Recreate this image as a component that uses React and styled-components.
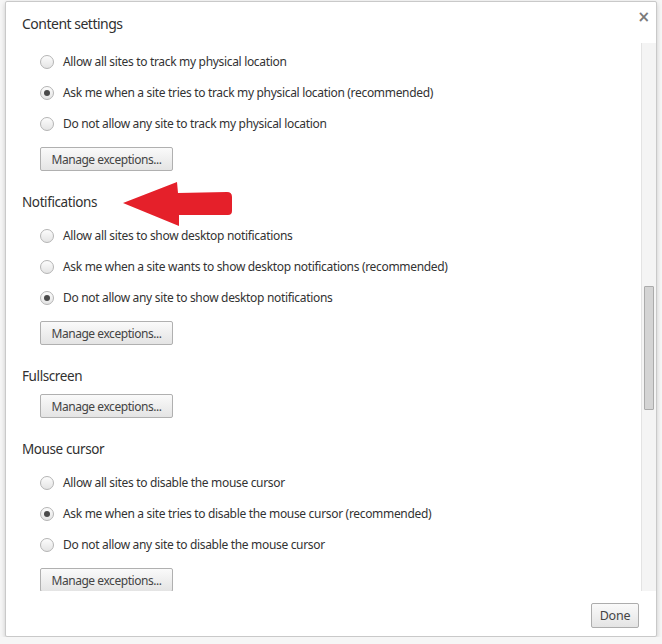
import React from "react";
import styled, { createGlobalStyle } from "styled-components";

const sections = [
  {
    heading: null,
    options: [
      "Allow all sites to track my physical location",
      "Ask me when a site tries to track my physical location (recommended)",
      "Do not allow any site to track my physical location",
    ],
    checked: 1,
  },
  {
    heading: "Notifications",
    options: [
      "Allow all sites to show desktop notifications",
      "Ask me when a site wants to show desktop notifications (recommended)",
      "Do not allow any site to show desktop notifications",
    ],
    checked: 2,
  },
  { heading: "Fullscreen", options: [], checked: -1 },
  {
    heading: "Mouse cursor",
    options: [
      "Allow all sites to disable the mouse cursor",
      "Ask me when a site tries to disable the mouse cursor (recommended)",
      "Do not allow any site to disable the mouse cursor",
    ],
    checked: 1,
  },
];

export default function App() {
  return (
    <>
      <GlobalStyle />
      <Dialog>
        {/* HEADER */}
        <Header>
          <Title>Content settings</Title>
          <Close>×</Close>
        </Header>

        {/* SCROLLING BODY */}
        <Body>
          <Content>
            {sections.map((s, i) => (
              <Section key={i} first={i === 0}>
                {s.heading && <Heading>{s.heading}</Heading>}
                {s.options.length > 0 && (
                  <Options>
                    {s.options.map((o, j) => (
                      <Option key={j}>
                        <Radio checked={j === s.checked} />
                        {o}
                      </Option>
                    ))}
                  </Options>
                )}
                <Button>Manage exceptions...</Button>
              </Section>
            ))}
          </Content>
          <Track>
            <Thumb offset={243} size={124} />
          </Track>
        </Body>

        {/* FOOTER */}
        <Footer>
          <DoneButton>Done</DoneButton>
        </Footer>

        {/* ANNOTATION */}
        <Arrow width="112" height="48" viewBox="0 0 112 48">
          <path
            d="M0 23 L54 2 L55 13 L104 12 Q109 12 109 17 L109 31 Q109 35 105 35 L56 35 L56 46 Z"
            fill="#e5202a"
          />
        </Arrow>
      </Dialog>
    </>
  );
}

const GlobalStyle = createGlobalStyle`
  html, body {
    margin: 0;
    padding: 0;
    background: #f6f6f6;
  }
  body {
    font-family: "Noto Sans", "Open Sans", sans-serif;
    color: #333;
  }
`;
const Dialog = styled.div`
  position: relative;
  box-sizing: border-box;
  margin: 1px 0 0 5px;
  width: 652px;
  height: 636px;
  background: #fff;
  border: 1px solid #c9c9c9;
  border-radius: 2px;
  box-shadow: 0 2px 5px rgba(0, 0, 0, 0.18);
  display: flex;
  flex-direction: column;
  overflow: hidden;
`;
const Header = styled.div`
  height: 41px;
  display: flex;
  align-items: flex-start;
  justify-content: space-between;
  padding: 12px 6px 0 16px;
  box-sizing: border-box;
`;
const Title = styled.div`
  font-size: 14px;
  letter-spacing: -0.5px;
  line-height: 20px;
  color: #303030;
`;
const Close = styled.div`
  font-family: "DejaVu Sans", sans-serif;
  font-size: 15px;
  font-weight: bold;
  line-height: 14px;
  margin-top: -4px;
  color: #7a7a7a;
`;
const Body = styled.div`
  display: flex;
  height: 548px;
`;
const Content = styled.div`
  flex: 1;
  overflow: hidden;
  padding: 3px 0 0 16px;
`;
const Section = styled.div`
  margin-top: ${(p) => (p.first ? "0" : "21px")};
`;
const Heading = styled.div`
  font-size: 13.5px;
  letter-spacing: -0.4px;
  line-height: 20px;
  color: #303030;
`;
const Options = styled.div`
  display: flex;
  flex-direction: column;
  margin-top: 8px;
  &:first-child {
    margin-top: 0;
  }
  padding-left: 18px;
`;
const Option = styled.div`
  height: 31px;
  display: flex;
  align-items: center;
  font-size: 12px;
  letter-spacing: -0.32px;
  color: #333;
`;
const Radio = styled.span`
  width: 14px;
  height: 14px;
  flex-shrink: 0;
  box-sizing: border-box;
  border-radius: 50%;
  border: 1px solid #b4b4b4;
  background: linear-gradient(#fcfcfc, #e4e4e4);
  margin-right: 9px;
  display: flex;
  align-items: center;
  justify-content: center;
  &::after {
    content: "";
    width: 6px;
    height: 6px;
    border-radius: 50%;
    background: #4a4a4a;
    display: ${(p) => (p.checked ? "block" : "none")};
  }
`;
const Button = styled.div`
  margin: 8px 0 0 18px;
  height: 24px;
  width: 133px;
  box-sizing: border-box;
  border: 1px solid #b0b0b0;
  border-radius: 2px;
  background: linear-gradient(#fafafa, #e4e4e4);
  font-size: 12px;
  letter-spacing: -0.45px;
  color: #444;
  display: flex;
  align-items: center;
  justify-content: center;
`;
const Track = styled.div`
  width: 14px;
  background: #f4f4f4;
  border-left: 1px solid #e3e3e3;
  display: flex;
  flex-direction: column;
  align-items: center;
`;
const Thumb = styled.div`
  margin-top: ${(p) => p.offset}px;
  width: 10px;
  height: ${(p) => p.size}px;
  box-sizing: border-box;
  background: #d4d4d4;
  border: 1px solid #ababab;
  border-radius: 1px;
`;
const Footer = styled.div`
  flex: 1;
  display: flex;
  justify-content: flex-end;
  align-items: flex-start;
  padding: 12px 17px 0 0;
`;
const DoneButton = styled.div`
  width: 48px;
  height: 25px;
  box-sizing: border-box;
  border: 1px solid #adadad;
  border-radius: 2px;
  background: linear-gradient(#fafafa, #e4e4e4);
  font-size: 12.5px;
  letter-spacing: -0.2px;
  color: #444;
  display: flex;
  align-items: center;
  justify-content: center;
`;
const Arrow = styled.svg`
  position: absolute;
  left: 117px;
  top: 178px;
`;
